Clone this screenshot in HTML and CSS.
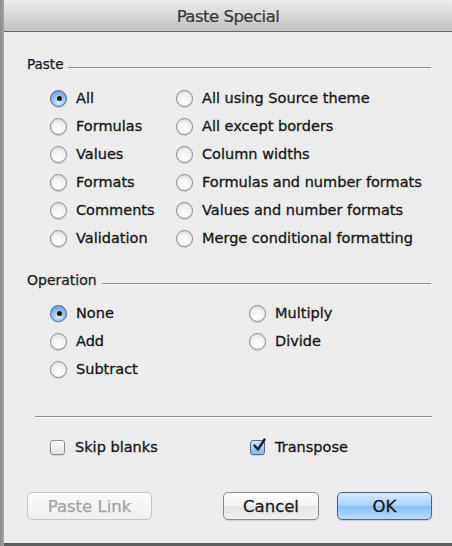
FILE: index.html
```html
<!DOCTYPE html>
<html>
<head>
<meta charset="utf-8">
<link rel="stylesheet" href="styles.css">
</head>
<body>
<div class="dialog">
  <div class="titlebar">Paste Special</div>
  <div class="content">
    <div class="group-head head-paste"><span class="group-label">Paste</span><span class="group-line"></span></div>
    <div class="options paste-grid">
      <div class="opt"><span class="radio on"></span><span>All</span></div>
      <div class="opt"><span class="radio"></span><span>All using Source theme</span></div>
      <div class="opt"><span class="radio"></span><span>Formulas</span></div>
      <div class="opt"><span class="radio"></span><span>All except borders</span></div>
      <div class="opt"><span class="radio"></span><span>Values</span></div>
      <div class="opt"><span class="radio"></span><span>Column widths</span></div>
      <div class="opt"><span class="radio"></span><span>Formats</span></div>
      <div class="opt"><span class="radio"></span><span>Formulas and number formats</span></div>
      <div class="opt"><span class="radio"></span><span>Comments</span></div>
      <div class="opt"><span class="radio"></span><span>Values and number formats</span></div>
      <div class="opt"><span class="radio"></span><span>Validation</span></div>
      <div class="opt"><span class="radio"></span><span>Merge conditional formatting</span></div>
    </div>
    <div class="group-head head-op"><span class="group-label">Operation</span><span class="group-line"></span></div>
    <div class="options op-grid">
      <div class="opt"><span class="radio on"></span><span>None</span></div>
      <div class="opt"><span class="radio"></span><span>Multiply</span></div>
      <div class="opt"><span class="radio"></span><span>Add</span></div>
      <div class="opt"><span class="radio"></span><span>Divide</span></div>
      <div class="opt"><span class="radio"></span><span>Subtract</span></div>
    </div>
    <div class="separator"></div>
    <div class="options check-grid">
      <div class="opt"><span class="check"></span><span>Skip blanks</span></div>
      <div class="opt"><span class="check on"><svg viewBox="0 0 16 16" width="16" height="16"><path d="M3.5 7.5 L7 11.5 L13.5 1.5" fill="none" stroke="#1b2230" stroke-width="2.4" stroke-linecap="round" stroke-linejoin="round"/></svg></span><span>Transpose</span></div>
    </div>
    <div class="buttons">
      <div class="btn disabled">Paste Link</div>
      <div class="spacer"></div>
      <div class="btn cancel">Cancel</div>
      <div class="btn ok">OK</div>
    </div>
  </div>
</div>
</body>
</html>
```
FILE: styles.css
```css
html, body {
  margin: 0;
  padding: 0;
}
body {
  width: 452px;
  height: 546px;
  background: linear-gradient(90deg, #8a8a8a 0, #a6a6a6 4px);
  font-family: "DejaVu Sans", "Liberation Sans", sans-serif;
  color: #1c1c1c;
  overflow: hidden;
}
.dialog {
  margin-left: 4px;
  width: 448px;
  height: 543px;
  background: #ececec;
  border-bottom: 3px solid #5e5e5e;
  display: flex;
  flex-direction: column;
}
.titlebar {
  height: 32px;
  box-sizing: border-box;
  border-bottom: 1px solid #6a6a6a;
  border-radius: 5px 5px 0 0;
  background: linear-gradient(#ececec, #d6d6d6 50%, #c2c2c2);
  text-align: center;
  font-size: 16.5px;
  letter-spacing: -0.5px;
  line-height: 33px;
  color: #383838;
  -webkit-text-stroke: 0.2px #383838;
}
.content {
  padding: 0 20px 0 23px;
  display: flex;
  flex-direction: column;
}
.group-head {
  display: flex;
  align-items: center;
  height: 18px;
}
.head-paste { margin-top: 23px; }
.head-op { margin-top: 19px; }
.group-label {
  font-size: 13.5px;
  color: #1a1a1a;
  -webkit-text-stroke: 0.25px #1a1a1a;
}
.head-op .group-label { font-size: 14px; }
.group-line {
  flex: 1;
  height: 1px;
  background: #8e8e8e;
  border-bottom: 1px solid #f8f8f8;
  margin-left: 5px;
  margin-top: 7px;
  margin-right: 1px;
}
.options {
  display: grid;
  grid-auto-rows: 28px;
  margin-left: 23px;
  font-size: 14.5px;
  color: #161616;
  -webkit-text-stroke: 0.3px #161616;
}
.paste-grid {
  grid-template-columns: 126px 1fr;
  margin-top: 11px;
}
.op-grid {
  grid-template-columns: 199px 1fr;
  margin-top: 10px;
}
.check-grid {
  grid-template-columns: 200px 1fr;
  margin-top: 15px;
}
.opt {
  display: flex;
  align-items: center;
  white-space: nowrap;
}
.radio {
  width: 17px;
  height: 17px;
  border-radius: 50%;
  box-sizing: border-box;
  border: 1px solid #8c8c8c;
  background: radial-gradient(circle at 50% 70%, #ffffff 0, #f4f4f4 45%, #d4d4d4 100%);
  box-shadow: 0 1px 1px rgba(0,0,0,0.15);
  margin-right: 9px;
  flex: none;
  position: relative;
  -webkit-text-stroke: 0;
}
.radio.on {
  border-color: #4e6a98;
  background: radial-gradient(circle at 50% 75%, #d8ecff 0, #8fc0f0 50%, #4f8ad6 100%);
}
.radio.on::after {
  content: "";
  position: absolute;
  left: 5.5px;
  top: 5.5px;
  width: 5px;
  height: 5px;
  border-radius: 50%;
  background: #151515;
}
.check {
  width: 15px;
  height: 15px;
  box-sizing: border-box;
  border: 1px solid #8c8c8c;
  border-radius: 3px;
  background: linear-gradient(#ffffff, #e2e2e2);
  box-shadow: 0 1px 1px rgba(0,0,0,0.12);
  margin-right: 10px;
  flex: none;
  position: relative;
}
.check.on {
  border-color: #506a96;
  background: linear-gradient(#cfe4fa, #8ab8e8);
}
.check svg {
  position: absolute;
  left: 0;
  top: -3px;
}
.separator {
  margin-top: 33px;
  margin-left: 8px;
  height: 1px;
  background: #8e8e8e;
  border-bottom: 1px solid #f8f8f8;
}
.buttons {
  display: flex;
  margin-top: 31px;
  height: 28px;
}
.spacer { flex: 1; }
.btn {
  height: 28px;
  box-sizing: border-box;
  border-radius: 5px;
  font-size: 16.5px;
  display: flex;
  align-items: center;
  justify-content: center;
}
.btn.disabled {
  width: 125px;
  border: 1px solid #c6c6c6;
  background: linear-gradient(#fafafa, #eeeeee);
  color: #a4a4a4;
  -webkit-text-stroke: 0.25px #a4a4a4;
}
.btn.cancel {
  width: 96px;
  border: 1px solid #8a8a8a;
  background: linear-gradient(#ffffff, #f2f2f2 50%, #e4e4e4 51%, #f0f0f0);
  color: #1a1a1a;
  -webkit-text-stroke: 0.3px #1a1a1a;
  box-shadow: 0 1px 1px rgba(0,0,0,0.12);
}
.btn.ok {
  width: 95px;
  margin-left: 18px;
  border: 1px solid #51618a;
  background: linear-gradient(#d6ebfd, #a8d2f8 50%, #86c0f4 51%, #b6dcfc);
  color: #151515;
  -webkit-text-stroke: 0.3px #151515;
  box-shadow: 0 1px 1px rgba(0,0,0,0.15);
}
```
